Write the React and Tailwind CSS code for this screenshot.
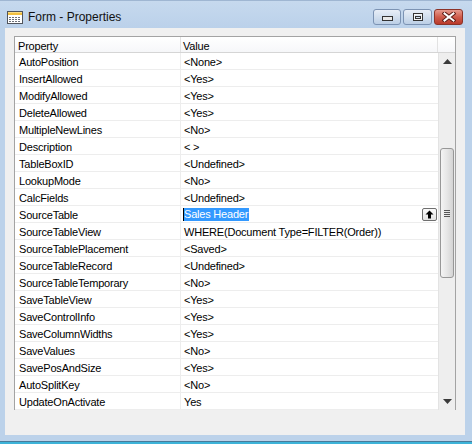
import React from "react";

const rows = [
  ["AutoPosition", "<None>"],
  ["InsertAllowed", "<Yes>"],
  ["ModifyAllowed", "<Yes>"],
  ["DeleteAllowed", "<Yes>"],
  ["MultipleNewLines", "<No>"],
  ["Description", "< >"],
  ["TableBoxID", "<Undefined>"],
  ["LookupMode", "<No>"],
  ["CalcFields", "<Undefined>"],
  ["SourceTable", "Sales Header", true],
  ["SourceTableView", "WHERE(Document Type=FILTER(Order))"],
  ["SourceTablePlacement", "<Saved>"],
  ["SourceTableRecord", "<Undefined>"],
  ["SourceTableTemporary", "<No>"],
  ["SaveTableView", "<Yes>"],
  ["SaveControlInfo", "<Yes>"],
  ["SaveColumnWidths", "<Yes>"],
  ["SaveValues", "<No>"],
  ["SavePosAndSize", "<Yes>"],
  ["AutoSplitKey", "<No>"],
  ["UpdateOnActivate", "Yes"],
];

function TitleIcon() {
  return (
    <svg width="16" height="13" viewBox="0 0 16 13">
      <rect x="0.5" y="0.5" width="15" height="12" fill="#ffffff" stroke="#50545c" />
      <rect x="1" y="1" width="14" height="3" fill="#f2c040" />
      <rect x="1" y="1" width="14" height="1" fill="#f9dc86" />
      {[6, 8, 10].map((y) =>
        [2, 5, 8, 11].map((x) => (
          <rect key={x + "-" + y} x={x} y={y} width="2" height="1" fill="#6b6f78" />
        ))
      )}
    </svg>
  );
}

function MinGlyph() {
  return (
    <svg width="11" height="5" viewBox="0 0 11 5">
      <rect x="0.5" y="0.5" width="10" height="4" fill="#e8e8e8" stroke="#333" />
    </svg>
  );
}

function MaxGlyph() {
  return (
    <svg width="10" height="8" viewBox="0 0 10 8">
      <rect x="0.5" y="0.5" width="9" height="7" fill="none" stroke="#333" />
      <rect x="1.5" y="1.5" width="7" height="5" fill="none" stroke="#f4f4f4" />
      <rect x="2.5" y="3.5" width="5" height="2" fill="none" stroke="#333" />
    </svg>
  );
}

function CloseGlyph() {
  return (
    <svg width="14" height="10" viewBox="0 0 14 10">
      <path d="M2.5 1.5 L11.5 8.5 M11.5 1.5 L2.5 8.5" stroke="#5a1a14" strokeWidth="4" strokeLinecap="square" />
      <path d="M2.5 1.5 L11.5 8.5 M11.5 1.5 L2.5 8.5" stroke="#ffffff" strokeWidth="2" strokeLinecap="square" />
    </svg>
  );
}

function ArrowUpBtn() {
  return (
    <div className="w-[15px] h-[13px] mr-[1px] rounded-[2px] border border-[#6f6f6f] bg-gradient-to-b from-[#fbfbfb] to-[#e4e4e4] flex items-center justify-center">
      <svg width="9" height="9" viewBox="0 0 9 9">
        <path d="M4.5 0.5 L8.5 4.5 L6 4.5 L6 8.5 L3 8.5 L3 4.5 L0.5 4.5 Z" fill="#000" />
      </svg>
    </div>
  );
}

export default function App() {
  return (
    <div
      className="w-[472px] h-[444px] flex flex-col bg-[#bcd2ea] overflow-hidden"
      style={{ fontFamily: '"Liberation Sans", Arial, sans-serif' }}
    >
      {/* Title bar */}
      <div className="h-[28px] flex items-start bg-gradient-to-b from-[#c6d9ee] to-[#bbd1ea] border-t border-[#9fb6d2]">
        <div className="flex items-center pl-[7px] pt-[9px] gap-[5px]">
          <TitleIcon />
          <span className="text-[12px] leading-[14px] text-[#111]">Form - Properties</span>
        </div>
        <div className="ml-auto flex gap-[2px] pt-[8px] pr-[9px]">
          <div className="w-[28px] h-[16px] rounded-[3px] border border-[#7c93b3] bg-gradient-to-b from-[#e8eef7] via-[#d2dfee] to-[#bccfe6] flex items-end justify-center pb-[3px]">
            <MinGlyph />
          </div>
          <div className="w-[29px] h-[16px] rounded-[3px] border border-[#7c93b3] bg-gradient-to-b from-[#e8eef7] via-[#d2dfee] to-[#bccfe6] flex items-center justify-center">
            <MaxGlyph />
          </div>
          <div className="w-[29px] h-[16px] rounded-[3px] border border-[#8c3328] bg-gradient-to-b from-[#e69a8e] via-[#cf5c4c] to-[#b9392a] flex items-center justify-center">
            <CloseGlyph />
          </div>
        </div>
      </div>

      {/* Client area */}
      <div className="ml-[5px] w-[460px] h-[407px] bg-[#f0f0f0] pt-[8px] pl-[9px]">
        <div className="w-[442px] border-l border-r border-t border-[#a3a3a3] bg-white text-[11px] leading-[14px] tracking-[-0.2px] text-black">
          {/* Header */}
          <div className="flex h-[16px] border-b border-[#d5d5d5] bg-gradient-to-b from-white to-[#f6f7f9]">
            <div className="w-[166px] border-r border-[#e2e2e2] pl-[3px] pt-[2px]">Property</div>
            <div className="w-[257px] border-r border-[#e2e2e2] pl-[2px] pt-[2px]">Value</div>
            <div className="flex-1" />
          </div>
          {/* Body */}
          <div className="flex">
            <div className="w-[423px]">
              {rows.map(([name, value, sel]) => (
                <div key={name} className="flex h-[17px] border-b border-[#ededed]">
                  <div className="w-[166px] border-r border-[#ededed] pl-[4px] pt-[2px] whitespace-nowrap">{name}</div>
                  <div className="flex-1 flex items-center pl-[3px] whitespace-nowrap">
                    {sel ? (
                      <>
                        <span className="-ml-[1px] mt-[1px] border-l border-black bg-[#3399ff] text-white leading-[13px] h-[13px] pr-[1px]">
                          {value}
                        </span>
                        <div className="ml-auto">
                          <ArrowUpBtn />
                        </div>
                      </>
                    ) : (
                      <span className="pt-[2px] self-start">{value}</span>
                    )}
                  </div>
                </div>
              ))}
            </div>
            {/* Scrollbar */}
            <div className="flex-1 flex flex-col border-l border-[#e3e3e3] bg-[#eeeeee]">
              <div className="h-[17px] flex items-center justify-center">
                <svg width="9" height="5" viewBox="0 0 9 5">
                  <path d="M4.5 0 L9 5 L0 5 Z" fill="#3a3a3a" />
                </svg>
              </div>
              <div className="mt-[78px] mx-[1px] h-[130px] rounded-[3px] border border-[#979797] bg-gradient-to-r from-[#f4f4f4] via-[#e6e6e6] to-[#d4d4d4] flex items-center justify-center">
                <div className="flex flex-col gap-[1px]">
                  <div className="w-[6px] h-[1px] bg-[#555]" />
                  <div className="w-[6px] h-[1px] bg-[#555]" />
                  <div className="w-[6px] h-[1px] bg-[#555]" />
                  <div className="w-[6px] h-[1px] bg-[#555]" />
                </div>
              </div>
              <div className="flex-1" />
              <div className="h-[17px] flex items-center justify-center">
                <svg width="9" height="5" viewBox="0 0 9 5">
                  <path d="M0 0 L9 0 L4.5 5 Z" fill="#3a3a3a" />
                </svg>
              </div>
            </div>
          </div>
        </div>
      </div>

      <div className="h-[6px]" />
      <div className="h-[1px] bg-[#4a7a99]" />
      <div className="h-[2px] bg-[#3db3d8]" />
    </div>
  );
}
